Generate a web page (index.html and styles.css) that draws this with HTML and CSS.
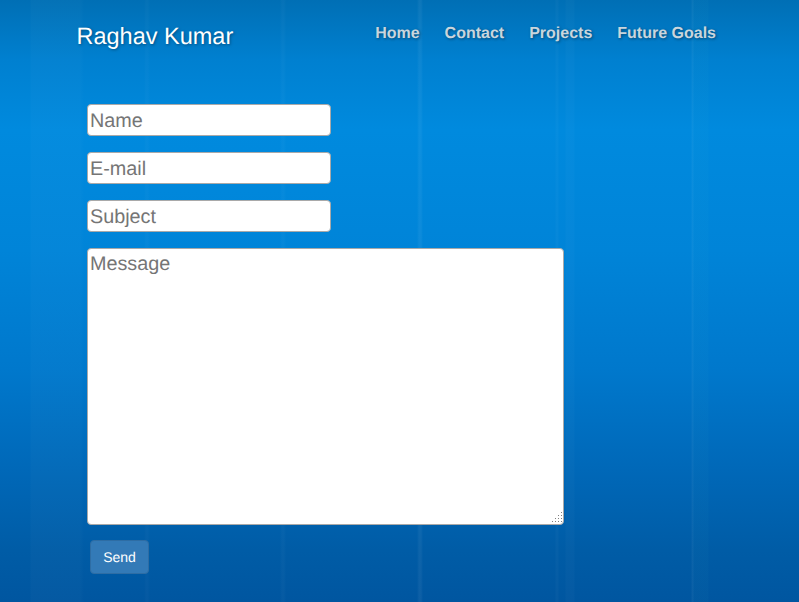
FILE: index.html
```html
<!DOCTYPE html>
<html lang="en">
<head>
<meta charset="utf-8">
<title>Raghav Kumar</title>
<link rel="stylesheet" href="styles.css">
</head>
<body>
<header class="header">
  <div class="brand">Raghav Kumar</div>
  <nav class="nav">
    <a href="#">Home</a>
    <a href="#">Contact</a>
    <a href="#">Projects</a>
    <a href="#">Future Goals</a>
  </nav>
</header>
<form class="form">
  <input class="field" type="text" placeholder="Name">
  <input class="field" type="text" placeholder="E-mail">
  <input class="field" type="text" placeholder="Subject">
  <textarea class="field message" placeholder="Message"></textarea>
  <button class="send" type="button">Send</button>
</form>
</body>
</html>
```
FILE: styles.css
```css
* { box-sizing: border-box; }
html, body { height: 100%; }
body {
  margin: 0;
  height: 602px;
  overflow: hidden;
  font-family: "Liberation Sans", Arial, sans-serif;
  text-rendering: geometricPrecision;
  background-color: #0078c8;
  background-image:
    linear-gradient(90deg,
      transparent 0, transparent 144px, rgba(255,255,255,.02) 146px, rgba(255,255,255,.02) 148px, transparent 150px,
      transparent 280px, rgba(255,255,255,.025) 282px, rgba(255,255,255,.025) 284px, transparent 286px,
      transparent 417px, rgba(255,255,255,.05) 419px, rgba(255,255,255,.05) 421px, transparent 423px,
      transparent 555px, rgba(255,255,255,.025) 556px, rgba(255,255,255,.025) 558px, transparent 559px,
      transparent 691px, rgba(255,255,255,.045) 692px, rgba(255,255,255,.045) 693px, transparent 694px),
    linear-gradient(90deg,
      transparent 0, transparent 30px, rgba(255,255,255,.02) 31px, rgba(255,255,255,.02) 80px, transparent 84px,
      transparent 565px, rgba(255,255,255,.02) 566px, rgba(255,255,255,.02) 574px, transparent 575px,
      transparent 692px, rgba(80,200,200,.03) 693px, rgba(80,200,200,.03) 708px, transparent 709px),
    linear-gradient(180deg, #006fb5 0, #0080d0 60px, #008ade 130px, #0084d8 250px, #0078cc 370px, #0068b8 470px, #005ca6 550px, #0056a0 602px);
}
.header {
  display: flex;
  justify-content: space-between;
  align-items: flex-start;
  padding: 22px 83px 0 76.5px;
  height: 104px;
}
.brand {
  font-size: 23.5px;
  line-height: 28px;
  color: #fff;
  text-shadow: 1px 1px 3px rgba(0,0,0,.35);
}
.nav {
  display: flex;
  gap: 25px;
  padding-top: 2px;
}
.nav a {
  font-size: 16px;
  line-height: 20px;
  font-weight: 700;
  color: #c9d5dd;
  text-decoration: none;
  text-shadow: 1px 1px 3px rgba(0,0,0,.4);
}
.form {
  display: flex;
  flex-direction: column;
  align-items: flex-start;
  gap: 16px;
  padding-left: 87px;
}
.field {
  display: block;
  width: 244px;
  height: 32px;
  margin: 0;
  padding: 2px 2px 0;
  background: #fff;
  border: 1px solid #a9a9a9;
  border-radius: 4px;
  font-family: "Liberation Sans", Arial, sans-serif;
  font-size: 19.8px;
  text-rendering: geometricPrecision;
  color: #333;
}
.field::placeholder { color: #757575; opacity: 1; }
.message {
  width: 477px;
  height: 277px;
  padding: 4px 2px 2px;
}
.message::-webkit-resizer {
  background: url("data:image/svg+xml,%3Csvg xmlns='http://www.w3.org/2000/svg' width='15' height='15' fill='%23808080'%3E%3Crect x='13' y='3' width='1' height='1'/%3E%3Crect x='10' y='6' width='1' height='1'/%3E%3Crect x='13' y='6' width='1' height='1'/%3E%3Crect x='7' y='9' width='1' height='1'/%3E%3Crect x='10' y='9' width='1' height='1'/%3E%3Crect x='13' y='9' width='1' height='1'/%3E%3Crect x='4' y='12' width='1' height='1'/%3E%3Crect x='7' y='12' width='1' height='1'/%3E%3Crect x='10' y='12' width='1' height='1'/%3E%3Crect x='13' y='12' width='1' height='1'/%3E%3C/svg%3E") no-repeat;
}
.send {
  margin-left: 3px;
  margin-top: -1px;
  width: 59px;
  height: 34px;
  padding: 0;
  background: #337ab7;
  border: 1px solid #2e6da4;
  border-radius: 4px;
  color: #fff;
  font-family: "Liberation Sans", Arial, sans-serif;
  font-size: 14px;
  text-rendering: geometricPrecision;
}
```
